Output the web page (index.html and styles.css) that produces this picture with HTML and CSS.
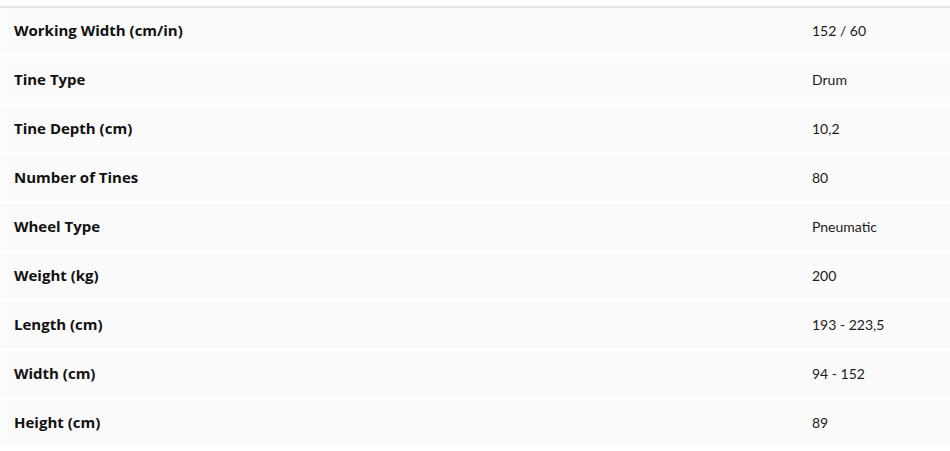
FILE: index.html
```html
<!DOCTYPE html>
<html>
<head>
<meta charset="utf-8">
<link rel="stylesheet" href="styles.css">
</head>
<body>
<div class="specs">
  <div class="row"><div class="label">Working Width (cm/in)</div><div class="value">152 / 60</div></div>
  <div class="row"><div class="label">Tine Type</div><div class="value">Drum</div></div>
  <div class="row"><div class="label">Tine Depth (cm)</div><div class="value">10,2</div></div>
  <div class="row"><div class="label">Number of Tines</div><div class="value">80</div></div>
  <div class="row"><div class="label">Wheel Type</div><div class="value">Pneumatic</div></div>
  <div class="row"><div class="label">Weight (kg)</div><div class="value">200</div></div>
  <div class="row"><div class="label">Length (cm)</div><div class="value">193 - 223,5</div></div>
  <div class="row"><div class="label">Width (cm)</div><div class="value">94 - 152</div></div>
  <div class="row"><div class="label">Height (cm)</div><div class="value">89</div></div>
</div>
</body>
</html>
```
FILE: styles.css
```css
html, body {
  margin: 0;
  padding: 0;
  background: #ffffff;
}
body {
  padding-top: 6px;
  font-family: "Lato", "Noto Sans", sans-serif;
  color: #111;
}
.specs {
  border-top: 2px solid #e4e4e4;
  display: flex;
  flex-direction: column;
  gap: 3px;
  padding-left: 1px;
}
.row {
  display: grid;
  grid-template-columns: 798px 1fr;
  align-items: center;
  height: 46px;
  padding-left: 13px;
  padding-bottom: 2px;
  box-sizing: border-box;
  background: #fafafa;
}
.label {
  font-family: "Open Sans", "Lato", sans-serif;
  font-weight: 700;
  font-size: 15px;
  color: #111;
}
.value {
  font-size: 14px;
  color: #1a1a1a;
}
```
